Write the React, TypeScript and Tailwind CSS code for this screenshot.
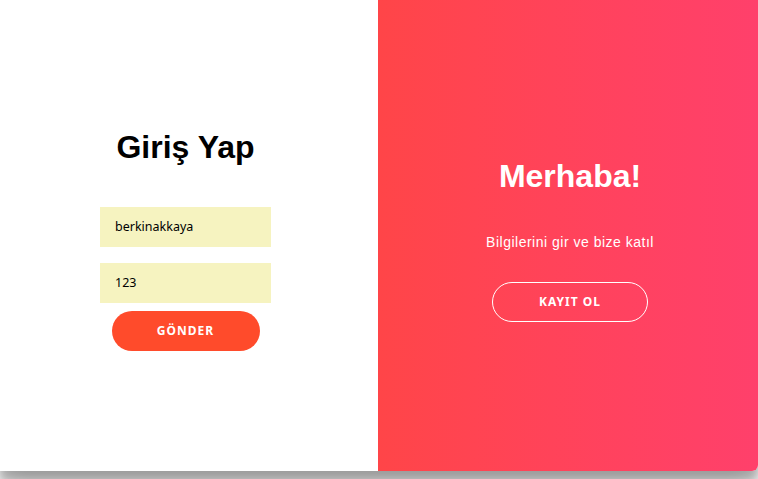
import React from "react";

export default function App() {
  return (
    <div className="h-[479px] w-[758px] overflow-hidden bg-white">
      <div className="flex h-[471px] w-[758px] overflow-hidden rounded-br-[6px] bg-white shadow-[0_14px_28px_rgba(0,0,0,0.25),0_10px_10px_rgba(0,0,0,0.22)]">
        <div className="flex w-[378px] flex-col items-center justify-center bg-white pt-[11px] pr-[7px]">
          <h1 className="m-0 font-['Liberation_Sans',Arial,sans-serif] text-[32px] font-bold leading-none text-black">
            Giriş Yap
          </h1>
          <div className="mt-[44px] flex w-[171px] flex-col items-center font-['Noto_Sans',sans-serif]">
            <div className="flex h-[40px] w-full items-center bg-[#F6F3C0] pl-[15px] text-[12.5px] text-black">
              berkinakkaya
            </div>
            <div className="mt-4 flex h-[40px] w-full items-center bg-[#F6F3C0] pl-[15px] text-[12.5px] text-black">
              123
            </div>
            <button className="mt-2 flex h-[40px] w-[148px] items-center justify-center rounded-full bg-[#FF4B2B] text-xs font-bold tracking-[1px] text-white">
              GÖNDER
            </button>
          </div>
        </div>
        <div className="flex flex-1 flex-col items-center justify-center bg-linear-to-r from-[#FF4548] to-[#FF406B] pt-[11px] pl-1 text-white">
          <h1 className="m-0 font-['Liberation_Sans',Arial,sans-serif] text-[32px] font-bold leading-none">
            Merhaba!
          </h1>
          <p className="mt-10 font-['Liberation_Sans',Arial,sans-serif] text-sm leading-5 tracking-[0.5px]">
            Bilgilerini gir ve bize katıl
          </p>
          <button className="mt-[30px] flex h-[40px] w-[156px] items-center justify-center rounded-full border border-white font-['Noto_Sans',sans-serif] text-xs font-bold tracking-[1px]">
            KAYIT OL
          </button>
        </div>
      </div>
    </div>
  );
}
